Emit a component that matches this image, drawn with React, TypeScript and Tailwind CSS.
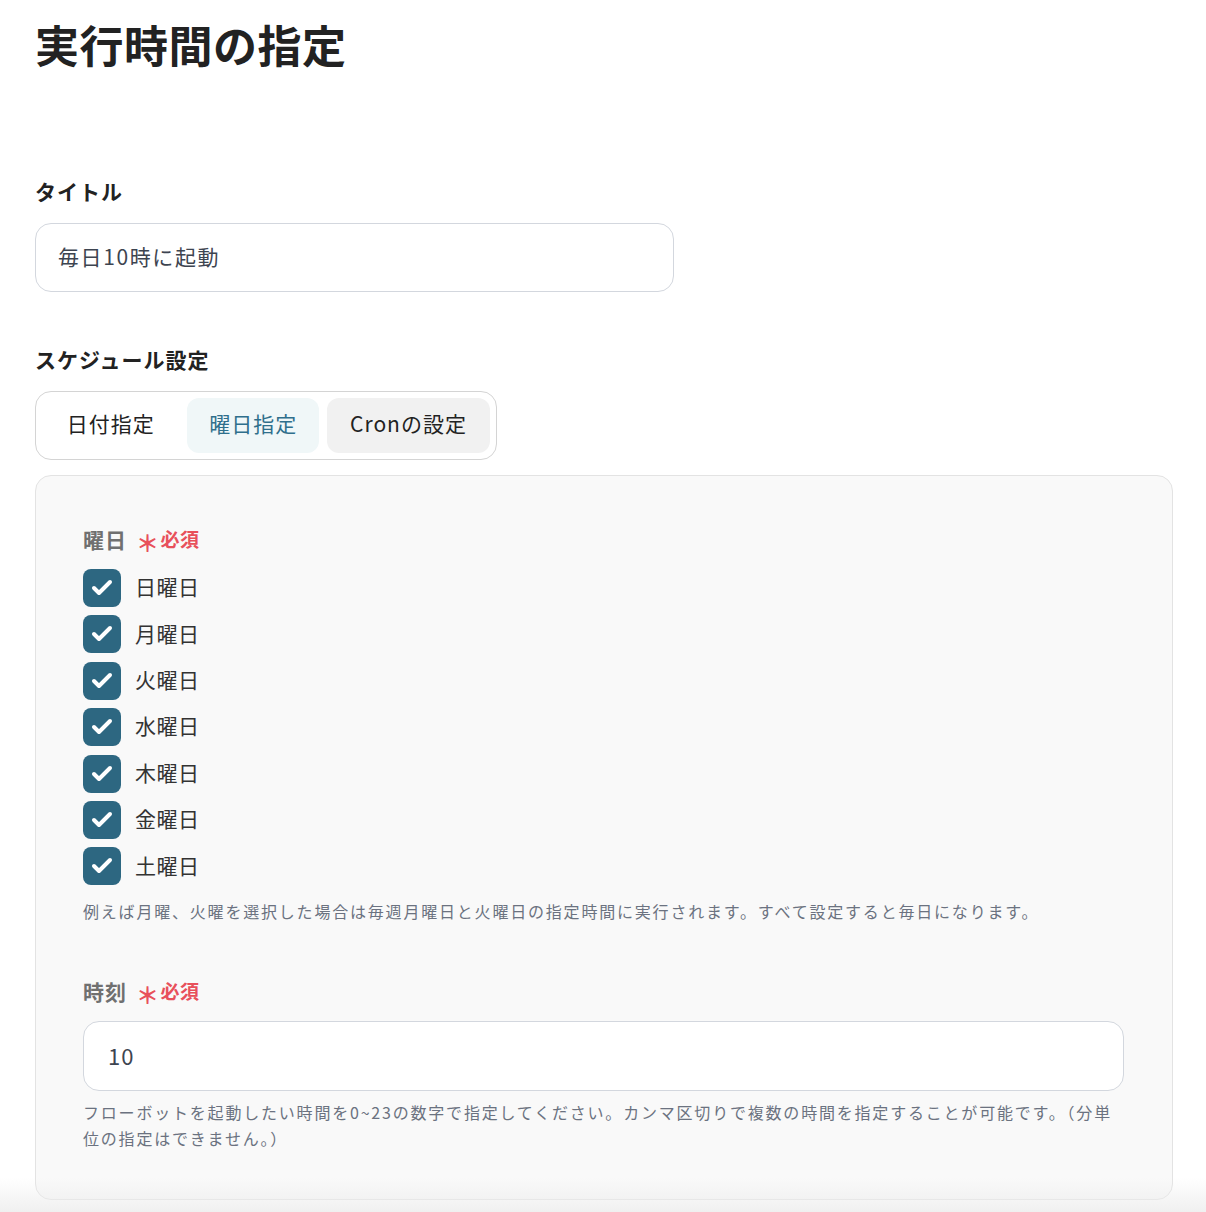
import { Check } from "lucide-react";

const days = ["日曜日", "月曜日", "火曜日", "水曜日", "木曜日", "金曜日", "土曜日"];

function Required() {
  return (
    <span className="ml-[9px] inline-flex items-center text-[19px] font-bold tracking-[0.5px] text-[#e8505b]">
      <span className="mr-[1px] text-[23px] leading-[22px] relative top-[3px]">＊</span>
      必須
    </span>
  );
}

export default function App() {
  return (
    <div
      className="relative min-h-[1212px] bg-white pl-[35px] pr-[33px] text-[#222]"
      style={{ fontFamily: '"Noto Sans CJK JP", "Noto Sans", sans-serif' }}
    >
      <h1 className="pt-[22px] text-[44px] leading-[44px] font-bold tracking-[0.5px]">実行時間の指定</h1>

      {/* title */}
      <div className="mt-[114px] text-[21px] leading-[22px] font-bold tracking-[1px]">タイトル</div>
      <div className="mt-[21px] flex h-[69px] w-[639px] items-center rounded-[16px] border border-[#d3d7de] px-[22px] pb-[2px] text-[21px] tracking-[1.6px] text-[#3d4450]">
        毎日10時に起動
      </div>

      {/* schedule */}
      <div className="mt-[56px] text-[21px] leading-[22px] font-bold tracking-[1px]">スケジュール設定</div>
      <div className="mt-[21px] flex h-[69px] w-[462px] items-center gap-[8px] rounded-[16px] border border-[#d4d4d4] px-[6px] text-[21px] tracking-[1px]">
        <div className="flex h-[55px] w-[140px] items-center justify-center rounded-[12px] pb-[3px] text-[#222]">日付指定</div>
        <div className="flex h-[55px] w-[134px] items-center justify-center rounded-[12px] bg-[#f0f7f8] pb-[3px] text-[#2f6f8c]">曜日指定</div>
        <div className="flex h-[55px] w-[166px] items-center justify-center rounded-[12px] bg-[#f1f1f1] pb-[3px] text-[#222]">Cronの設定</div>
      </div>

      <div className="mt-[15px] rounded-[16px] border border-[#e3e3e3] bg-[#f9f9f9] pt-[52px] pb-[48px] pl-[47px] pr-[48px]">
        <div className="flex items-center text-[21px] leading-[22px] font-bold tracking-[1px] text-[#707070]">
          曜日
          <Required />
        </div>
        <div className="mt-[19px] flex flex-col gap-[8.4px]">
          {days.map((d) => (
            <label key={d} className="flex h-[38px] items-center gap-[14px]">
              <span className="flex h-[38px] w-[38px] items-center justify-center rounded-[8px] bg-[#2d6781]">
                <Check className="h-[24px] w-[24px] text-white" strokeWidth={4} />
              </span>
              <span className="pb-[2px] text-[21px] tracking-[0.5px] text-[#333]">{d}</span>
            </label>
          ))}
        </div>
        <p className="mt-[14px] text-[16px] leading-[24px] tracking-[1.8px] text-[#6b7280]">
          例えば月曜、火曜を選択した場合は毎週月曜日と火曜日の指定時間に実行されます。すべて設定すると毎日になります。
        </p>

        <div className="mt-[57px] flex items-center text-[21px] leading-[22px] font-bold tracking-[1px] text-[#707070]">
          時刻
          <Required />
        </div>
        <div className="mt-[19px] flex h-[70px] items-center rounded-[16px] border border-[#d3d7de] bg-white px-[24px] pb-[2px] text-[22px] tracking-[1px] text-[#3d4450]">
          10
        </div>
        <p className="mt-[8px] text-[16px] leading-[26px] tracking-[1.8px] text-[#6b7280]">
          フローボットを起動したい時間を0~23の数字で指定してください。カンマ区切りで複数の時間を指定することが可能です。（分単位の指定はできません。）
        </p>
      </div>

      <div className="pointer-events-none absolute inset-x-0 bottom-0 h-[34px] bg-gradient-to-b from-transparent to-[#ececec]/80" />
    </div>
  );
}
